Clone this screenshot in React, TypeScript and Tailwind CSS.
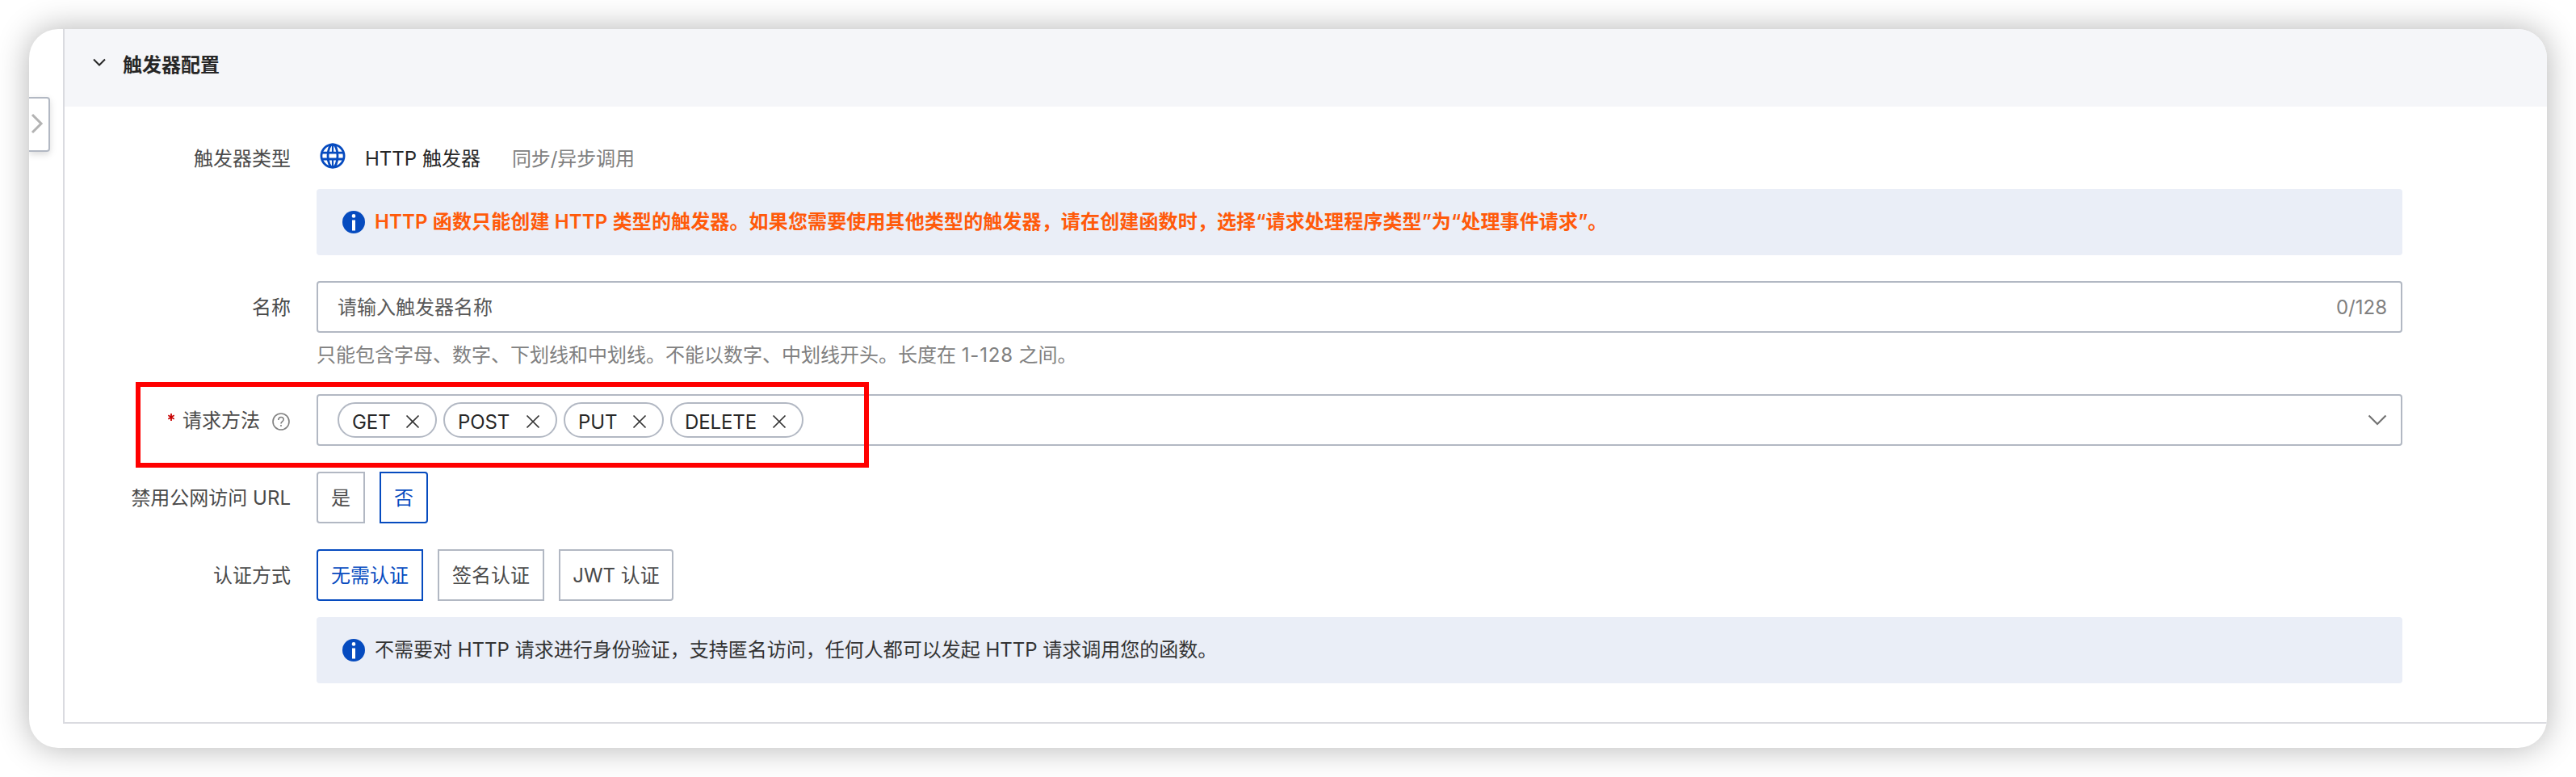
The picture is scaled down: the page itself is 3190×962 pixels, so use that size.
import React from "react";

const BLUE = "#064bbf";

function Info() {
  return (
    <svg width="28" height="28" viewBox="0 0 28 28" className="shrink-0">
      <circle cx="14" cy="14" r="14" fill={BLUE} />
      <circle cx="14" cy="6.4" r="2.3" fill="#fff" />
      <rect x="12" y="11.5" width="4" height="13" fill="#fff" />
    </svg>
  );
}

function Globe() {
  return (
    <svg width="32" height="32" viewBox="0 0 32 32" fill="none" stroke={BLUE} strokeWidth="2.8" className="-mt-[5px] shrink-0">
      <circle cx="16" cy="16" r="14.1" />
      <ellipse cx="16" cy="16" rx="6" ry="14.1" />
      <path d="M2.5 12.2h27M2.5 20h27" />
      <path d="M16 2v10M16 20v10" strokeWidth="2.2" />
    </svg>
  );
}

function Alert({ children, className }: { children: React.ReactNode; className: string }) {
  return (
    <div className={`flex h-[82px] items-center gap-3 rounded-sm bg-[#eaeef7] pl-8 ${className}`}>
      <Info />
      <span>{children}</span>
    </div>
  );
}

function Chip({ label, width }: { label: string; width: string }) {
  return (
    <div className={`flex h-11 items-center justify-between rounded-full border-2 border-[#b2b8c3] pr-[19px] pl-4 text-[#262626] ${width}`}>
      <span className="pt-[5px] tracking-[-0.1px]">{label}</span>
      <svg width="18" height="18" viewBox="0 0 18 18" fill="none" stroke="#333" strokeWidth="1.7" className="mt-1">
        <path d="M1.5 1.5l15 15M16.5 1.5l-15 15" />
      </svg>
    </div>
  );
}

function Label({ children }: { children: React.ReactNode }) {
  return <div className="flex w-[280px] shrink-0 items-center justify-end pt-[2px]">{children}</div>;
}

function Option({ label, active, className }: { label: string; active?: boolean; className: string }) {
  return (
    <button
      className={`flex h-16 items-center justify-center whitespace-nowrap border-2 pt-px ${active ? "border-[#064bbf] text-[#064bbf]" : "border-[#b2b8c3]"} ${className}`}
    >
      {label}
    </button>
  );
}

export default function App() {
  return (
    <div className="h-[962px] w-[3190px] bg-white p-9 font-['Inter','Noto_Sans_CJK_SC',sans-serif] text-[24px] leading-8 text-[#4a4a4a]">
      <div className="relative h-[890px] w-[3118px] rounded-[36px] bg-white shadow-[0_0_40px_rgba(0,0,0,0.3)]">
        <div className="flex h-full overflow-hidden rounded-[36px]">
          <div className="w-[42px] shrink-0 pt-[84px]">
            <div className="flex h-[68px] w-[26px] items-center rounded-r-sm border-2 border-l-0 border-[#b2b8c3] pl-[2px] shadow-[0_3px_8px_rgba(0,0,0,0.15)]">
              <svg width="16" height="26" viewBox="0 0 16 26" fill="none" stroke="#b3b3b3" strokeWidth="3" className="-mt-[2px]">
                <path d="M2 2l11 11L2 24" />
              </svg>
            </div>
          </div>
          <div className="h-[860px] w-[3076px] border-b-2 border-l-2 border-[#dadbe0]">
            <div className="flex h-24 items-start bg-[#f5f6f9] pt-[29px] pl-[35px]">
              <svg width="16" height="12" viewBox="0 0 16 12" fill="none" stroke="#262626" strokeWidth="2" className="mt-[7px]">
                <path d="M1 1.5l7 7 7-7" />
              </svg>
              <span className="ml-[21px] font-semibold text-[#262626]">触发器配置</span>
            </div>
            <div className="flex flex-col text-[24px]">
              <div className="flex h-[102px] items-center pt-[25px]">
                <Label>触发器类型</Label>
                <div className="ml-9 flex items-center">
                  <Globe />
                  <span className="ml-6 pt-[2px] text-[#262626]">HTTP 触发器</span>
                  <span className="ml-[39px] pt-[2px] tracking-[-0.1px] text-[#808080]">同步/异步调用</span>
                </div>
              </div>
              <Alert className="ml-[312px] w-[2583px] font-semibold tracking-[0.14px] text-[#ff5a0a]">
                HTTP 函数只能创建 HTTP 类型的触发器。如果您需要使用其他类型的触发器，请在创建函数时，选择“请求处理程序类型”为“处理事件请求”。
              </Alert>
              <div className="mt-8 flex items-center">
                <Label>名称</Label>
                <div className="ml-8 flex h-16 w-[2583px] items-center justify-between rounded-sm border-2 border-[#b2b8c3] pt-[2px] pr-[17px] pl-6">
                  <span className="text-[#595959]">请输入触发器名称</span>
                  <span className="text-[#808080]">0/128</span>
                </div>
              </div>
              <div className="mt-3 ml-[312px] h-16 text-[#808080]">
                只能包含字母、数字、下划线和中划线。不能以数字、中划线开头。长度在 <span className="tracking-[0.8px]">1-128</span> 之间。
              </div>
              <div className="flex items-center">
                <Label>
                  <svg width="8" height="9" viewBox="0 0 8 9" fill="none" stroke="#c80000" strokeWidth="1.8" className="mr-[10px] -mt-[10px]">
                    <path d="M4 0v9M0.3 2.2l7.4 4.6M7.7 2.2L0.3 6.8" />
                  </svg>
                  <span>请求方法</span>
                  <svg width="22" height="22" viewBox="0 0 22 22" fill="none" stroke="#808080" strokeWidth="1.6" className="mt-[2px] mr-px ml-[15px]">
                    <circle cx="11" cy="11" r="10" />
                    <path d="M7.8 8.9c0-4.4 6.4-4.4 6.4-.6 0 2.5-3.2 2.5-3.2 5.2M11 15v2" />
                  </svg>
                </Label>
                <div className="ml-8 flex h-16 w-[2583px] items-center gap-2 rounded-sm border-2 border-[#b2b8c3] pr-[17px] pl-6">
                  <Chip label="GET" width="w-[123px]" />
                  <Chip label="POST" width="w-[141px]" />
                  <Chip label="PUT" width="w-[124px]" />
                  <Chip label="DELETE" width="w-[165px]" />
                  <svg width="24" height="14" viewBox="0 0 24 14" fill="none" stroke="#737373" strokeWidth="2.2" className="ml-auto">
                    <path d="M1.5 1.5L12 12 22.5 1.5" />
                  </svg>
                </div>
              </div>
              <div className="mt-8 flex items-center">
                <Label>禁用公网访问 URL</Label>
                <div className="ml-8 flex gap-[18px]">
                  <Option label="是" className="w-[60px] rounded-l-sm" />
                  <Option label="否" active className="w-[60px] rounded-r-sm" />
                </div>
              </div>
              <div className="mt-8 flex items-center">
                <Label>认证方式</Label>
                <div className="ml-8 flex gap-[18px]">
                  <Option label="无需认证" active className="w-[132px] rounded-l-sm" />
                  <Option label="签名认证" className="w-[132px]" />
                  <Option label="JWT 认证" className="w-[142px] rounded-r-sm" />
                </div>
              </div>
              <Alert className="mt-5 ml-[312px] w-[2583px] text-[#333]">
                不需要对 HTTP 请求进行身份验证，支持匿名访问，任何人都可以发起 HTTP 请求调用您的函数。
              </Alert>
            </div>
          </div>
        </div>
        <div className="absolute top-[437px] left-[132px] h-[106px] w-[908px] border-6 border-[#ff0000]" />
      </div>
    </div>
  );
}
